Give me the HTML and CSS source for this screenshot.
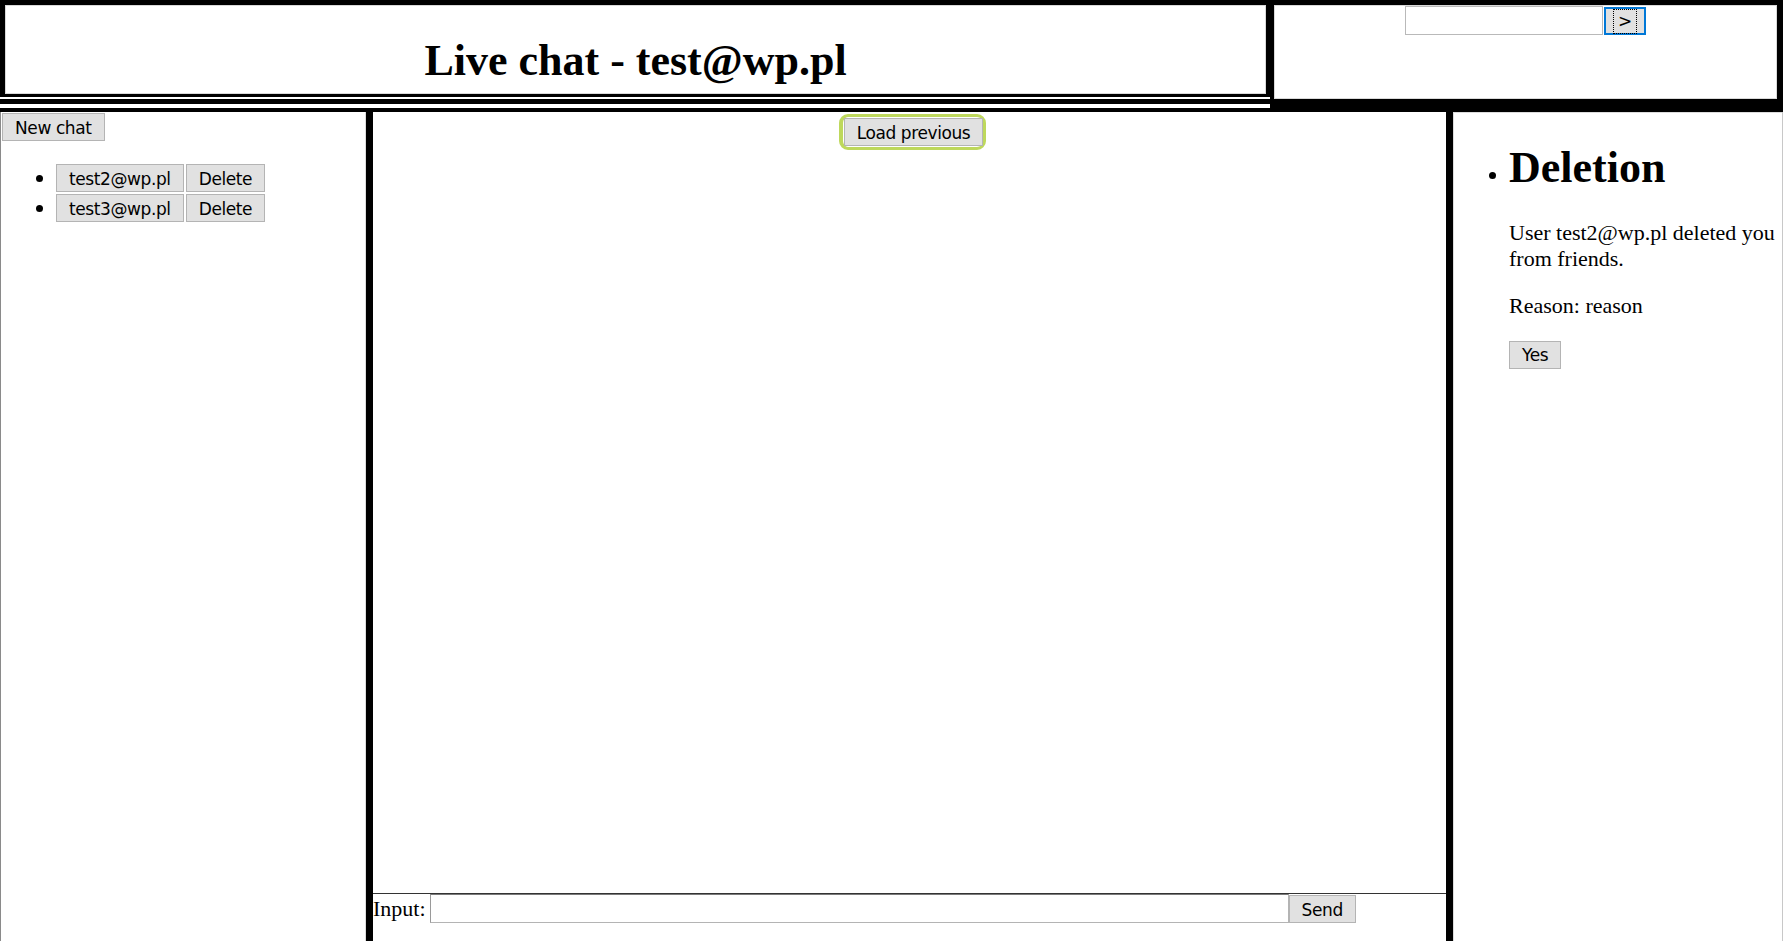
FILE: index.html
```html
<!DOCTYPE html>
<html lang="en">
<head>
<meta charset="utf-8">
<title>Live chat</title>
<link rel="stylesheet" href="styles.css">
</head>
<body>
<div class="page">
  <div class="top">
    <div class="head-main">
      <div class="head-box"><h1>Live chat - test@wp.pl</h1></div>
      <div class="stripe"></div>
    </div>
    <div class="head-side">
      <input class="search" type="text"><button class="btn go"><span class="focus-rect">&gt;</span></button>
    </div>
  </div>
  <div class="cols">
    <aside class="friends">
      <button class="btn new-chat">New chat</button>
      <ul class="chat-list">
        <li><button class="btn">test2@wp.pl</button><button class="btn">Delete</button></li>
        <li><button class="btn">test3@wp.pl</button><button class="btn">Delete</button></li>
      </ul>
    </aside>
    <main class="chat">
      <div class="load-row"><span class="ring"><button class="btn">Load previous</button></span></div>
      <div class="messages"></div>
      <div class="input-row">
        <label class="input-label">Input:</label>
        <input class="msg-input" type="text">
        <button class="btn send">Send</button>
      </div>
    </main>
    <aside class="notes">
      <ul class="note-list">
        <li>
          <h1>Deletion</h1>
          <p>User test2@wp.pl deleted you from friends.</p>
          <p>Reason: reason</p>
          <button class="btn yes">Yes</button>
        </li>
      </ul>
    </aside>
  </div>
</div>
</body>
</html>
```
FILE: styles.css
```css
html, body {
  margin: 0;
  height: 100%;
}
body {
  font-family: "Liberation Serif", "Times New Roman", serif;
  font-size: 22px;
  color: #000;
  background: #fff;
  overflow: hidden;
}
.page {
  display: flex;
  flex-direction: column;
  height: 100vh;
}
.btn {
  font-family: "DejaVu Sans", Verdana, sans-serif;
  font-size: 17px;
  letter-spacing: -0.4px;
  color: #000;
  background: #e1e1e1;
  border: 1px solid #b4b4b4;
  box-sizing: border-box;
  height: 28px;
  padding: 2px 12px 0;
  margin: 0;
  line-height: 1;
}

/* header */
.top {
  display: flex;
  height: 108px;
  flex: none;
}
.head-main {
  width: 1270px;
  flex: none;
}
.head-box {
  box-sizing: border-box;
  height: 97px;
  border: 5px solid #000;
  border-right-width: 4px;
  border-bottom-width: 3px;
  box-shadow: inset 0 0 0 1px #d9d9d9;
  text-align: center;
}
.head-box h1 {
  margin: 29.5px 0 0;
  font-size: 44px;
  font-weight: bold;
}
.stripe {
  margin-top: 2px;
  height: 5px;
  background: #000;
}
.head-side {
  flex: 1;
  box-sizing: border-box;
  height: 108px;
  border: solid #000;
  border-width: 5px 6px 9px 4px;
  box-shadow: inset 0 0 0 1px #d9d9d9;
  padding-top: 1px;
  display: flex;
  justify-content: center;
  align-items: flex-start;
}
.search {
  box-sizing: border-box;
  width: 198px;
  height: 29px;
  border: 1px solid #b9b9b9;
  margin: 0;
  padding: 0 2px;
}
.go {
  margin: 1px 0 0 1px;
  width: 42px;
  padding: 0;
  border: 2px solid #0078d7;
  display: flex;
  align-items: center;
  justify-content: center;
}
.focus-rect {
  display: inline-block;
  border: 1px dotted #000;
  padding: 3px 4px;
}

/* columns */
.cols {
  flex: 1;
  display: flex;
  border-top: 4px solid #000;
  min-height: 0;
}
.friends {
  width: 366px;
  flex: none;
  box-sizing: border-box;
  border-left: 1px solid #8a8a8a;
  border-right: 1px solid #dcdcdc;
}
.new-chat {
  margin: 1px 0 0 1px;
  display: block;
}
.chat-list {
  margin: 22px 0 0;
  padding-left: 55px;
}
.chat-list li {
  height: 30px;
  line-height: 30px;
}
.chat-list .btn {
  vertical-align: top;
  margin: 1px 2px 0 0;
}

.chat {
  flex: 1;
  display: flex;
  flex-direction: column;
  border-left: 7px solid #000;
  border-right: 7px solid #000;
  min-width: 0;
}
.load-row {
  display: flex;
  justify-content: center;
  padding: 2px 0 0 6px;
}
.ring {
  display: inline-flex;
  border: 3px solid #bed85c;
  border-left-width: 4px;
  border-radius: 9px;
  padding: 1px 0 1px 1px;
}
.messages {
  flex: 1;
}
.input-row {
  flex: none;
  height: 47px;
  border-top: 1px solid #333;
  display: flex;
  align-items: flex-start;
}
.input-label {
  line-height: 29px;
  margin-right: 4px;
}
.msg-input {
  box-sizing: border-box;
  width: 859px;
  height: 29px;
  margin: 0;
  border: 1px solid #b4b4b4;
  border-top-color: #7a7a7a;
  border-left-color: #9a9a9a;
}
.send {
  margin-top: 1px;
}

.notes {
  width: 330px;
  flex: none;
  box-sizing: border-box;
  border-left: 1px solid #dcdcdc;
  border-right: 1px solid #c8c8c8;
  box-shadow: inset 0 1px 0 #dcdcdc;
}
.note-list {
  margin: 22px 0 0;
  padding-left: 55px;
}
.note-list h1 {
  font-size: 44px;
  margin: 29.5px 0 27px;
}
.note-list p {
  margin: 21.5px 0;
}
.yes {
  display: block;
}
```
